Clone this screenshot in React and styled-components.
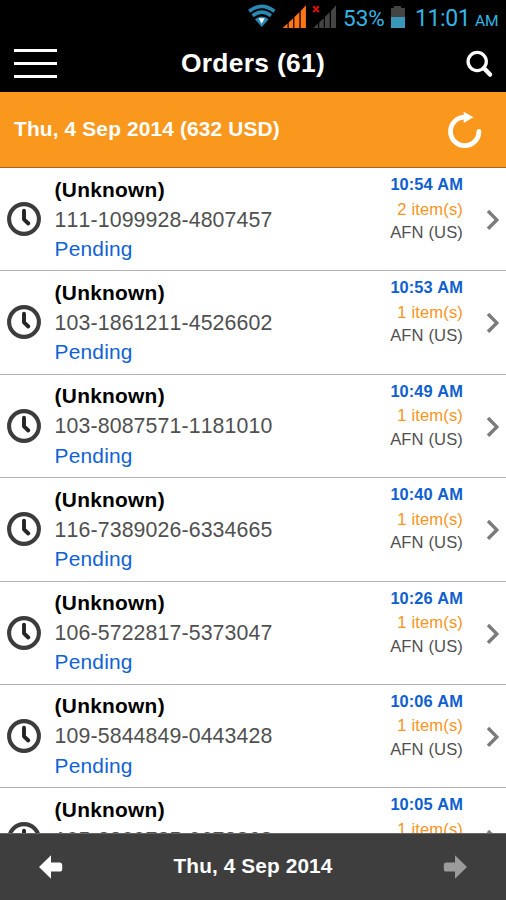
import React from "react";
import styled, { createGlobalStyle } from "styled-components";

const Global = createGlobalStyle`
  * { box-sizing: border-box; }
  body { margin: 0; background: #fff; font-family: "Liberation Sans", Arial, sans-serif; font-kerning: none; }
  svg { display: block; flex: none; }
  button { border: 0; padding: 0; margin: 0; background: none; }
`;

const Screen = styled.div`
  width: 506px;
  height: 900px;
  display: flex;
  flex-direction: column;
  overflow: hidden;
  background: #fff;
`;

const StatusBar = styled.div`
  height: 36px;
  flex: none;
  display: flex;
  justify-content: flex-end;
  padding-right: 8px;
  background: #000;
  color: #33b5e5;
  font-family: Roboto, sans-serif;
`;

const StatusIcons = styled.svg`
  width: 95px;
  height: 36px;
`;

const StatusText = styled.span`
  width: ${(p) => p.$width}px;
  font-size: ${(p) => p.$size}px;
  line-height: ${(p) => p.$line || 36}px;
  letter-spacing: ${(p) => p.$spacing || 0}px;
  white-space: nowrap;
`;

const Header = styled.header`
  height: 56px;
  flex: none;
  display: grid;
  grid-template-columns: 57px 1fr 57px;
  align-items: center;
  background: #000;
  color: #fff;
`;

const MenuButton = styled.button`
  width: 43px;
  height: 29px;
  align-self: start;
  margin: 13px 0 0 14px;
  display: flex;
  flex-direction: column;
  justify-content: space-between;
`;

const MenuLine = styled.span`
  height: 3px;
  width: 43px;
  background: #fff;
`;

const Title = styled.h1`
  margin: 0;
  text-align: center;
  font-size: 26.4px;
  letter-spacing: 0.3px;
  line-height: 54px;
  padding-bottom: 2px;
`;

const IconButton = styled.button`
  display: flex;
  justify-content: flex-end;
  padding-right: ${(p) => p.$right || 0}px;
`;

const Banner = styled.div`
  height: 76px;
  flex: none;
  display: flex;
  align-items: center;
  justify-content: space-between;
  padding-left: 14px;
  background: #f9981d;
  border-bottom: 1px solid #a8681c;
  color: #fff;
`;

const BannerText = styled.div`
  font-size: 20.9px;
  font-weight: bold;
  letter-spacing: 0.14px;
  padding-bottom: 1px;
`;

const List = styled.main`
  flex: 1;
  min-height: 0;
  overflow: hidden;
`;

const Row = styled.article`
  height: 103.4px;
  display: flex;
  border-bottom: 1px solid #b4b4b4;
`;

const RowIcon = styled.div`
  width: 54px;
  padding: 34px 0 0 7px;
`;

const Details = styled.div`
  flex: 1;
  padding: 6.5px 0 0 0.6px;
  font-size: 20.9px;
  letter-spacing: 0.2px;
  line-height: 29.7px;
  color: #505050;
`;

const Name = styled.div`
  letter-spacing: 0.26px;
  font-weight: bold;
  color: #000;
`;

const Number = styled.div`
  font-size: 21.3px;
  letter-spacing: 0.12px;
  padding-top: 1.3px;
  margin-bottom: -1.3px;
`;

const State = styled.div`
  color: #0f62d6;
`;

const Meta = styled.div`
  padding-top: 5px;
  text-align: right;
  font-size: 16.6px;
  letter-spacing: 0.12px;
  line-height: 23.5px;
  color: #505050;
`;

const Time = styled.div`
  font-size: 16.4px;
  letter-spacing: 0.08px;
  font-weight: bold;
  color: #0f5fd0;
`;

const Items = styled.div`
  padding-top: 1px;
  color: #f8941c;
`;

const Chevron = styled.div`
  width: 43px;
  padding: 41px 0 0 22.5px;
`;

const Footer = styled.footer`
  height: 67px;
  flex: none;
  display: flex;
  align-items: center;
  justify-content: space-between;
  padding: 0 39px;
  background: #3e3e3e;
  border-top: 1px solid #666;
  color: #fff;
`;

const FooterDate = styled.div`
  font-size: 20.8px;
  letter-spacing: 0.12px;
  font-weight: bold;
  padding-bottom: 2px;
`;

const orders = [
  ["111-1099928-4807457", "10:54 AM", 2],
  ["103-1861211-4526602", "10:53 AM", 1],
  ["103-8087571-1181010", "10:49 AM", 1],
  ["116-7389026-6334665", "10:40 AM", 1],
  ["106-5722817-5373047", "10:26 AM", 1],
  ["109-5844849-0443428", "10:06 AM", 1],
  ["105-3809735-0673868", "10:05 AM", 1],
];

const SystemIcons = () => (
  <StatusIcons viewBox="0 0 95 36">
    <g transform="translate(-1.9 0) scale(.95 1)">
      <g fill="none" stroke="#2789b4" strokeWidth="3.6">
        <path d="M3.2 11.2Q16.5 1.4 29.8 11.2" />
        <path d="M6.8 15.8Q16.5 8.4 26.2 15.8" />
      </g>
      <path d="M9.3 19.2Q16.5 13.6 23.7 19.2L16.5 27Z" fill="#2789b4" />
      <path d="M13.2 18.3h6.3l-3.1 5.5Z" fill="#fff" />
    </g>
    <g transform="translate(-2.3 0)">
      <path d="M37 28l4.8-4.4V28ZM43 22.5l4.5-4.3V28H43ZM48.7 17l5-4.8V28h-5ZM55 11l5.2-5.8V28H55Z" fill="#ff7413" />
      <path d="M67.6 28l4.6-4.4V28ZM73.5 22.5l4.5-4.3V28h-4.5ZM79.2 17l4.8-4.8V28h-4.8ZM85.3 11l5-5.8V28h-5Z" fill="#444" />
      <path d="M67.6 6.2l5.6 5.8m0-5.8l-5.6 5.8" stroke="#d40f0f" strokeWidth="2.2" />
    </g>
  </StatusIcons>
);

const BatteryIcon = () => (
  <svg width="25" height="36" viewBox="3 0 25 36">
    <path d="M4 8h3V6h7v2h4v9H4Z" fill="#444" />
    <path d="M4 17h14v11H4Z" fill="#3a97b9" />
  </svg>
);

const SearchIcon = () => (
  <svg width="28" height="28" viewBox="0 0 28 28" fill="none" stroke="#fff">
    <circle cx="11.2" cy="11.5" r="9.1" strokeWidth="3.3" />
    <path d="M18 18.2l6 6.4" strokeWidth="4.4" strokeLinecap="round" />
  </svg>
);

const RefreshIcon = () => (
  <svg width="36" height="38" viewBox="0 0 36 38">
    <path d="M17.7 6.2A14.2 14.2 0 1 0 31.9 20.4" fill="none" stroke="#fff" strokeWidth="4.8" strokeLinecap="round" />
    <path d="M16.7 .7L26.4 6.3L16.7 12Z" fill="#fff" />
  </svg>
);

const ClockIcon = () => (
  <svg width="34" height="34" viewBox="0 0 34 34" fill="none" stroke="#3c3c3c">
    <circle cx="17" cy="17" r="14.9" strokeWidth="4.1" />
    <path d="M17 8.8v8.5l4.3 4.2" stroke="#242424" strokeWidth="3.9" strokeLinecap="round" strokeLinejoin="round" />
  </svg>
);

const ChevronIcon = () => (
  <svg width="15" height="22" viewBox="0 0 15 22">
    <path d="M2 2l8.8 8.9L2 19.8" fill="none" stroke="#7b7b7b" strokeWidth="3.4" />
  </svg>
);

const ArrowIcon = ({ forward }) => (
  <svg width="24" height="24" viewBox="0 0 24 24">
    <path
      d="M0 12L12 .3V7.4H20.5Q23.2 7.4 23.2 10V14Q23.2 16.6 20.5 16.6H12V23.7Z"
      fill={forward ? "#9b9b9b" : "#fff"}
      transform={forward ? "matrix(-1 0 0 1 24 0)" : undefined}
    />
  </svg>
);

const OrderRow = ({ order: [number, time, count] }) => (
  <Row>
    <RowIcon><ClockIcon /></RowIcon>
    <Details>
      <Name>(Unknown)</Name>
      <Number>{number}</Number>
      <State>Pending</State>
    </Details>
    <Meta>
      <Time>{time}</Time>
      <Items>{count} item(s)</Items>
      <div>AFN (US)</div>
    </Meta>
    <Chevron><ChevronIcon /></Chevron>
  </Row>
);

export default function App() {
  return (
    <>
      <Global />
      <Screen>
        <StatusBar>
          <SystemIcons />
          <StatusText $width={47} $size={22.5} $line={37}>53%</StatusText>
          <BatteryIcon />
          <StatusText $width={60} $size={23} $line={37} $spacing={-0.4}>11:01</StatusText>
          <StatusText $width={23} $size={15.5} $line={42}>AM</StatusText>
        </StatusBar>
        <Header>
          <MenuButton aria-label="Menu">
            <MenuLine />
            <MenuLine />
            <MenuLine />
          </MenuButton>
          <Title>Orders (61)</Title>
          <IconButton $right={12} aria-label="Search"><SearchIcon /></IconButton>
        </Header>
        <Banner>
          <BannerText>Thu, 4 Sep 2014 (632 USD)</BannerText>
          <IconButton $right={23} aria-label="Refresh"><RefreshIcon /></IconButton>
        </Banner>
        <List>
          {orders.map((order) => <OrderRow key={order[0]} order={order} />)}
        </List>
        <Footer>
          <ArrowIcon />
          <FooterDate>Thu, 4 Sep 2014</FooterDate>
          <ArrowIcon forward />
        </Footer>
      </Screen>
    </>
  );
}
